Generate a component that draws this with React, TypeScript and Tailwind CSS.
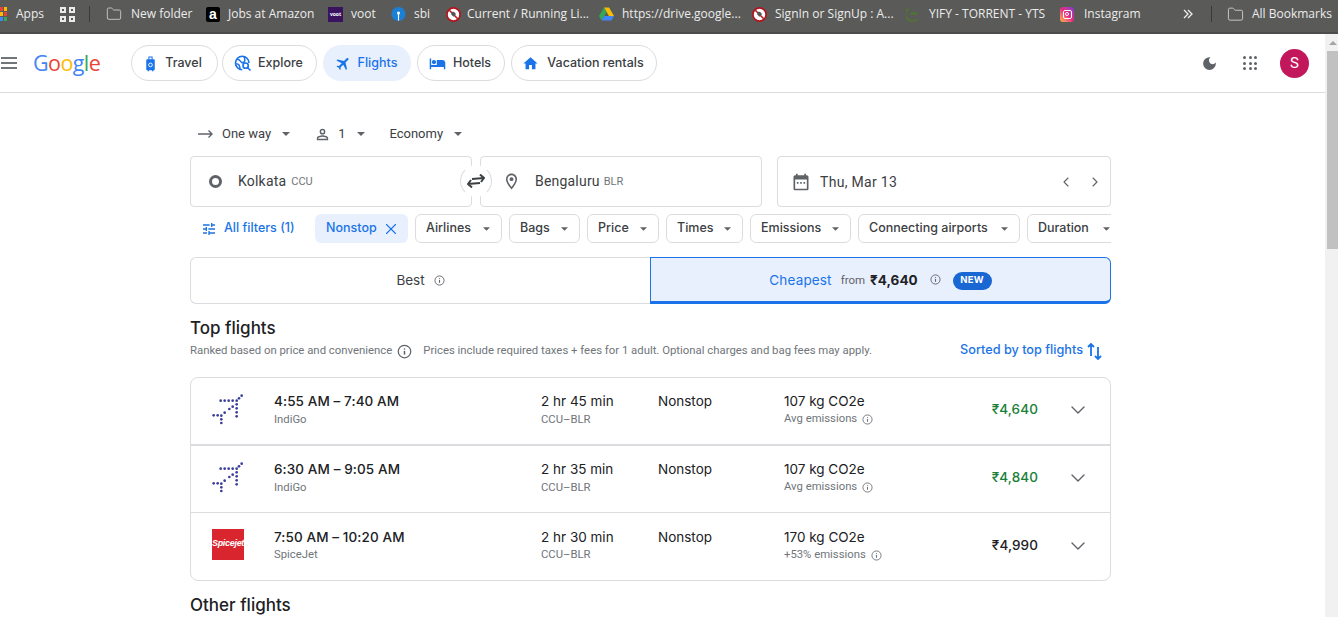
import React from 'react';
import { ChevronDown, ChevronLeft, ChevronRight, X, Folder } from 'lucide-react';

const Info = ({ className }: { className?: string }) => (
  <svg className={className} viewBox="0 0 24 24" fill="none" stroke="currentColor" strokeWidth={2}>
    <circle cx="12" cy="12" r="10" />
    <path d="M12 11v6" strokeWidth={2.4} />
    <path d="M12 7v2" strokeWidth={2.4} />
  </svg>
);

const Caret = ({ className }: { className?: string }) => (
  <svg className={className} viewBox="0 0 10 5" fill="currentColor">
    <path d="M0 0l5 5 5-5z" />
  </svg>
);

const Icon = ({ d, className }: { d: string; className?: string }) => (
  <svg className={className} viewBox="0 0 24 24" fill="currentColor">
    <path d={d} />
  </svg>
);

const PLANE = 'M21 16v-2l-8-5V3.5c0-.83-.67-1.5-1.5-1.5S10 2.67 10 3.5V9l-8 5v2l8-2.5V19l-2 1.5V22l3.5-1 3.5 1v-1.5L13 19v-5.5l8 2.5z';
const BED = 'M7 13c1.66 0 3-1.34 3-3S8.66 7 7 7s-3 1.34-3 3 1.34 3 3 3zm12-6h-8v7H3V5H1v15h2v-3h18v3h2v-9c0-2.21-1.79-4-4-4z';
const HOME = 'M10 20v-6h4v6h5v-8h3L12 3 2 12h3v8z';
const TUNE = 'M3 17v2h6v-2H3zM3 5v2h10V5H3zm10 16v-2h8v-2h-8v-2h-2v6h2zM7 9v2H3v2h4v2h2V9H7zm14 4v-2H11v2h10zm-6-4h2V7h4V5h-4V3h-2v6z';
const MOON = 'M12 3a9 9 0 1 0 9 9c0-.46-.04-.92-.1-1.36a5.4 5.4 0 0 1-4.4 2.26 5.4 5.4 0 0 1-3.14-9.8C12.92 3.04 12.46 3 12 3z';
const CAL = 'M19 4h-1V2h-2v2H8V2H6v2H5c-1.1 0-2 .9-2 2v14c0 1.1.9 2 2 2h14c1.1 0 2-.9 2-2V6c0-1.1-.9-2-2-2zm0 16H5V9h14v11zM7 12h2v2H7zm4 0h2v2h-2zm4 0h2v2h-2z';
const PIN = 'M12 2C8.13 2 5 5.13 5 9c0 5.25 7 13 7 13s7-7.75 7-13c0-3.87-3.13-7-7-7zM7 9c0-2.76 2.24-5 5-5s5 2.24 5 5c0 2.88-2.88 7.19-5 9.88C9.92 16.21 7 11.85 7 9zm5-2.5a2.5 2.5 0 1 0 0 5 2.5 2.5 0 0 0 0-5z';
const PERSON = 'M12 6a2 2 0 1 1 0 4 2 2 0 0 1 0-4m0 9c2.7 0 5.8 1.29 6 2v1H6v-.99c.2-.72 3.3-2.01 6-2.01M12 4a4 4 0 1 0 0 8 4 4 0 0 0 0-8zm0 9c-2.67 0-8 1.34-8 4v3h16v-3c0-2.66-5.33-4-8-4z';

const NoEntry = () => (
  <svg className="w-[15px] h-[15px]" viewBox="0 0 16 16">
    <circle cx="8" cy="8" r="7" fill="#fff" stroke="#b3141d" strokeWidth="1.8" />
    <path d="M3.5 3.5l9 9" stroke="#b3141d" strokeWidth="1.6" />
    <path d="M6 5.5c2-1 4 0 4.5 2.5L8 10.5 5.5 8z" fill="#555" />
  </svg>
);

const Favicon = ({ kind }: { kind: string }) => {
  if (kind === 'amazon') {
    return <span className="w-[14px] h-[15px] bg-black rounded-[2px] text-white text-[14px] leading-[14px] text-center font-bold font-['Liberation_Sans',sans-serif]">a</span>;
  }
  if (kind === 'voot') {
    return <span className="w-[15px] h-[15px] bg-[#3b1260] text-white text-[5px] leading-[15px] text-center font-bold">voot</span>;
  }
  if (kind === 'sbi') {
    return (
      <svg className="w-[15px] h-[16px]" viewBox="0 0 16 16">
        <circle cx="8" cy="8" r="7.5" fill="#1c7fd6" />
        <circle cx="8" cy="7" r="1.6" fill="#fff" />
        <rect x="7.4" y="7" width="1.2" height="8" fill="#fff" />
      </svg>
    );
  }
  if (kind === 'drive') {
    return (
      <svg className="w-[15px] h-[14px]" viewBox="0 0 16 14">
        <path d="M5.3 0h5.4l5.3 9h-5.4z" fill="#fbbc04" />
        <path d="M5.3 0L0 9l2.7 5 5.3-9z" fill="#34a853" />
        <path d="M2.7 14h10.6l2.7-5H5.4z" fill="#4285f4" />
      </svg>
    );
  }
  if (kind === 'yts') {
    return (
      <svg className="w-[15px] h-[15px]" viewBox="0 0 16 16" fill="none">
        <path d="M3 2a7 7 0 0 0 0 12c3 1.5 7 1 9-1" stroke="#4d7c25" strokeWidth="1.4" />
        <path d="M5 7h7" stroke="#4d7c25" strokeWidth="2" />
      </svg>
    );
  }
  if (kind === 'insta') {
    return (
      <span className="w-[14px] h-[15px] rounded-[3px] bg-gradient-to-tr from-[#fdb52b] via-[#e8227f] to-[#7a2fd0] flex items-center justify-center">
        <span className="w-[9px] h-[9px] rounded-[2px] border border-white flex items-center justify-center">
          <span className="w-[4px] h-[4px] rounded-full border border-white" />
        </span>
      </span>
    );
  }
  return <NoEntry />;
};

const bookmarks = [
  { kind: 'amazon', label: 'Jobs at Amazon', width: 'w-[122px]', gap: 'gap-2' },
  { kind: 'voot', label: 'voot', width: 'w-[63px]', gap: 'gap-2' },
  { kind: 'sbi', label: 'sbi', width: 'w-[55px]', gap: 'gap-2' },
  { kind: 'no', label: 'Current / Running Li...', width: 'w-[153px]', gap: 'gap-[6px]' },
  { kind: 'drive', label: 'https://drive.google...', width: 'w-[153px]', gap: 'gap-2' },
  { kind: 'no', label: 'SignIn or SignUp : A...', width: 'w-[154px]', gap: 'gap-2' },
  { kind: 'yts', label: 'YIFY - TORRENT - YTS', width: 'w-[154px]', gap: 'gap-2' },
  { kind: 'insta', label: 'Instagram', width: 'w-[123px]', gap: 'gap-[10px]' },
];

const BookmarksBar = () => (
  <div className="h-[34px] bg-[#5a5a58] border-b-2 border-[#4c4c4a] pb-[4px] flex items-center text-[12px] text-[#ececec] font-['Open_Sans',sans-serif] whitespace-nowrap shrink-0 overflow-hidden">
    <div className="w-[8px] h-[14px] grid grid-cols-2 gap-[1px] mr-[9px] -ml-[1px]">
      <span className="bg-[#ea4335]" />
      <span className="bg-[#fbbc04]" />
      <span className="bg-[#fbbc04]" />
      <span className="bg-[#ea4335]" />
      <span className="bg-[#4285f4]" />
      <span className="bg-[#34a853]" />
    </div>
    <span className="w-[44px]">Apps</span>
    <div className="w-[15px] h-[15px] grid grid-cols-2 gap-[3px]">
      <span className="border-2 border-[#ececec]" />
      <span className="border-2 border-[#ececec]" />
      <span className="border-2 border-[#ececec]" />
      <span className="border-2 border-[#ececec]" />
    </div>
    <div className="w-px h-[16px] bg-[#3a3a38] ml-[14px] mr-[16px]" />
    <div className="flex items-center gap-[9px] w-[100px]">
      <Folder className="w-[16px] h-[16px] text-[#cfcfcf]" strokeWidth={1.3} />
      <span>New folder</span>
    </div>
    {bookmarks.map((b) => (
      <div key={b.label} className={`flex items-center ${b.gap} ${b.width}`}>
        <Favicon kind={b.kind} />
        <span>{b.label}</span>
      </div>
    ))}
    <svg className="w-[10px] h-[10px] text-[#ececec]" viewBox="0 0 10 10" fill="none" stroke="currentColor" strokeWidth="1.3">
      <path d="M1 1l4 4-4 4M5 1l4 4-4 4" />
    </svg>
    <div className="w-px h-[16px] bg-[#3a3a38] ml-[18px] mr-[15px]" />
    <div className="flex items-center gap-2">
      <Folder className="w-[17px] h-[17px] text-[#cfcfcf]" strokeWidth={1.3} />
      <span>All Bookmarks</span>
    </div>
  </div>
);

const TravelIcon = () => (
  <svg className="w-[17px] h-[17px] text-[#1a73e8]" viewBox="0 0 24 24" fill="currentColor">
    <path d="M9 2h6v4h1.5c.8 0 1.5.7 1.5 1.5V20c0 .8-.7 1.500-1.500 1.500H16V23h-2v-1.500h-4V23H8v-1.500h-.5C6.700 21.500 6 20.800 6 20V7.500C6 6.700 6.700 6 7.500 6H9zm1.500 1.500V6h3V3.500z" />
    <circle cx="12" cy="14" r="2.600" fill="none" stroke="#fff" strokeWidth="1.300" />
  </svg>
);

const ExploreIcon = () => (
  <svg className="w-[18px] h-[18px] text-[#1a73e8]" viewBox="0 0 24 24" fill="none" stroke="currentColor" strokeWidth={2.200}>
    <path d="M11 21a9 9 0 1 1 9-9" />
    <path d="M4 7c3 0 4 1 5 3s2 2 4 1 2-4 0-8M3 13c3 0 5 1 5 7" strokeWidth={2} />
    <circle cx="15.500" cy="15.500" r="3.500" fill="#fff" />
    <path d="M18 18l4 4" />
  </svg>
);

const tabs = [
  { label: 'Travel', icon: <TravelIcon />, width: 'w-[87px] pr-[5px]', gap: 'gap-[6px]', margin: '' },
  { label: 'Explore', icon: <ExploreIcon />, width: 'w-[95px] pr-[2px]', gap: 'gap-[6px]', margin: 'ml-[4px]' },
  { label: 'Flights', icon: <Icon d={PLANE} className="w-[17px] h-[17px] rotate-45 text-[#1a73e8]" />, width: 'w-[88px] pr-[2px]', active: true, gap: 'gap-[6px]', margin: 'ml-[6px]' },
  { label: 'Hotels', icon: <Icon d={BED} className="w-[17px] h-[17px] text-[#1a73e8]" />, width: 'w-[88px] pr-[2px]', gap: 'gap-[7px]', margin: 'ml-[6px]' },
  { label: 'Vacation rentals', icon: <Icon d={HOME} className="w-[17px] h-[17px] text-[#1a73e8]" />, width: 'w-[146px] pr-[2px]', gap: 'gap-[8px]', margin: 'ml-[6px]' },
];

const Header = () => (
  <header className="h-[59px] border-b border-[#dadce0] flex items-center shrink-0">
    <div className="w-[16px] ml-[1px] flex flex-col gap-[3px]">
      <span className="h-[2px] bg-[#70757a]" />
      <span className="h-[2px] bg-[#70757a]" />
      <span className="h-[2px] bg-[#70757a]" />
    </div>
    <div className="ml-[16px] w-[83px] text-[21.500px] leading-none tracking-[-0.6px] font-['Open_Sans',sans-serif]">
      <span className="text-[#4285f4]">G</span>
      <span className="text-[#ea4335]">o</span>
      <span className="text-[#fbbc04]">o</span>
      <span className="text-[#4285f4]">g</span>
      <span className="text-[#34a853]">l</span>
      <span className="text-[#ea4335]">e</span>
    </div>
    <nav className="ml-[15px] flex font-['Inter',sans-serif]">
      {tabs.map((t) => (
        <div
          key={t.label}
          className={`h-[36px] rounded-full flex items-center justify-center ${t.margin} ${t.gap} ${t.width} text-[12.500px] font-medium ${
            t.active ? 'bg-[#e8f0fe] text-[#1a73e8]' : 'border border-[#dadce0] text-[#3c4043]'
          }`}
        >
          {t.icon}
          <span>{t.label}</span>
        </div>
      ))}
    </nav>
    <div className="ml-auto flex items-center">
      <Icon d={MOON} className="w-[17px] h-[17px] text-[#5f6368]" />
      <div className="ml-[25px] grid grid-cols-3 gap-[2.500px] w-[14px]">
        {[0, 1, 2, 3, 4, 5, 6, 7, 8].map((i) => (
          <span key={i} className="w-[3px] h-[3px] rounded-full bg-[#5f6368]" />
        ))}
      </div>
      <div className="ml-[23px] mr-[16px] w-[29px] h-[29px] rounded-full bg-[#c2185b] text-white text-[15px] flex items-center justify-center">S</div>
    </div>
  </header>
);

const filters = [
  { label: 'Airlines', width: 'w-[87px]' },
  { label: 'Bags', width: 'w-[71px]' },
  { label: 'Price', width: 'w-[72px]' },
  { label: 'Times', width: 'w-[77px]' },
  { label: 'Emissions', width: 'w-[101px]' },
  { label: 'Connecting airports', width: 'w-[162px]' },
  { label: 'Duration', width: 'w-[95px]' },
];

const OptionsRow = () => (
  <div className="h-[24px] flex items-center text-[13px] text-[#5f6368]">
    <svg className="ml-[8px] w-[15px] h-[10px] text-[#5f6368]" viewBox="0 0 15 10" fill="none" stroke="currentColor" strokeWidth="1.400">
      <path d="M0 5h14M10.500 1.500L14 5l-3.500 3.500" />
    </svg>
    <span className="ml-[9px] text-[#3c4043]">One way</span>
    <Caret className="ml-[11px] w-[8px] h-[4px]" />
    <Icon d={PERSON} className="ml-[24px] w-[17px] h-[17px]" />
    <span className="ml-[7px] text-[#3c4043]">1</span>
    <Caret className="ml-[12px] w-[8px] h-[4px]" />
    <span className="ml-[24px] text-[#3c4043]">Economy</span>
    <Caret className="ml-[11px] w-[8px] h-[4px]" />
  </div>
);

const SearchRow = () => (
  <div className="mt-[10px] h-[51px] flex">
    <div className="relative flex">
      <div className="w-[282px] border border-[#dadce0] rounded-[4px] flex items-center">
        <span className="ml-[18px] w-[13px] h-[13px] rounded-full border-[3px] border-[#5f6368]" />
        <span className="ml-[16px] text-[14px] text-[#3c4043] tracking-[0.2px]">Kolkata</span>
        <span className="ml-[5px] mt-[2px] text-[11px] text-[#70757a]">CCU</span>
      </div>
      <div className="ml-[8px] w-[282px] border border-[#dadce0] rounded-[4px] flex items-center">
        <Icon d={PIN} className="ml-[21px] w-[19px] h-[19px] text-[#5f6368]" />
        <span className="ml-[14px] text-[14px] text-[#3c4043] tracking-[0.2px]">Bengaluru</span>
        <span className="ml-[4px] mt-[2px] text-[11px] text-[#70757a]">BLR</span>
      </div>
      <div className="absolute left-[270px] top-[9px] w-[32px] h-[32px] rounded-full bg-white border border-[#dadce0] border-y-transparent flex items-center justify-center">
        <svg className="w-[18px] h-[14px] text-[#3c4043]" viewBox="0 0 18 14" fill="none" stroke="currentColor" strokeWidth="2">
          <path d="M5 5l12-1M13 0.500l4 3.500-3 4" />
          <path d="M13 9L1 10M5 13.500L1 10l3-4" />
        </svg>
      </div>
    </div>
    <div className="ml-[15px] flex-1 border border-[#dadce0] rounded-[4px] flex items-center">
      <Icon d={CAL} className="ml-[13px] w-[20px] h-[20px] text-[#5f6368]" />
      <span className="ml-[9px] mt-[1px] text-[14px] text-[#3c4043] tracking-[0.3px]">Thu, Mar 13</span>
      <ChevronLeft className="ml-auto w-[16px] h-[16px] text-[#5f6368]" strokeWidth={1.700} />
      <ChevronRight className="ml-[13px] mr-[7px] w-[16px] h-[16px] text-[#5f6368]" strokeWidth={1.700} />
    </div>
  </div>
);

const FilterRow = () => (
  <div className="mt-[7px] h-[29px] flex items-stretch overflow-hidden text-[12.500px] font-['Inter',sans-serif] font-medium">
    <div className="w-[125px] shrink-0 flex items-center text-[#1a73e8]">
      <Icon d={TUNE} className="ml-[11px] w-[16px] h-[16px]" />
      <span className="ml-[7px]">All filters (1)</span>
    </div>
    <div className="w-[93px] shrink-0 rounded-[6px] bg-[#e8f0fe] text-[#1a73e8] flex items-center pl-[11px]">
      <span>Nonstop</span>
      <X className="ml-[5px] w-[18px] h-[18px]" strokeWidth={1.500} />
    </div>
    {filters.map((f) => (
      <div key={f.label} className={`ml-[7px] shrink-0 ${f.width} rounded-[6px] border border-[#dadce0] text-[#3c4043] flex items-center pl-[10px]`}>
        <span>{f.label}</span>
        <Caret className="ml-auto mr-[11px] w-[7px] h-[4px] text-[#5f6368]" />
      </div>
    ))}
  </div>
);

const SortTabs = () => (
  <div className="mt-[14px] h-[47px] flex font-['Inter',sans-serif]">
    <div className="w-[460px] border border-r-0 border-[#dadce0] rounded-l-[6px] flex items-center justify-center text-[13.500px] text-[#3c4043]">
      <span>Best</span>
      <Info className="ml-[9px] w-[11px] h-[11px] text-[#5f6368]" />
    </div>
    <div className="flex-1 bg-[#e8f0fe] border border-b-[3px] border-[#1a73e8] rounded-r-[6px] flex items-center justify-center">
      <span className="mt-[1px] text-[13.500px] text-[#1a73e8] tracking-[0.15px]">Cheapest</span>
      <span className="ml-[9px] mt-[3px] text-[11.500px] text-[#5f6368] font-['Roboto',sans-serif]">from</span>
      <span className="ml-[5px] mt-[1px] text-[13.500px] font-bold text-[#202124]">₹4,640</span>
      <Info className="ml-[12px] w-[11px] h-[11px] text-[#5f6368]" />
      <span className="ml-[12px] mt-[2px] h-[18px] w-[39px] rounded-full bg-[#1967d2] text-white text-[9.500px] font-bold flex items-center justify-center tracking-[0.3px]">NEW</span>
    </div>
  </div>
);

const IndigoLogo = () => {
  const dots = [
    [62, 47], [74, 47], [86, 47], [98, 47], [110, 47], [125, 32], [117, 40], [110, 58], [110, 70], [110, 82], [110, 94],
    [98, 65], [88, 72], [74, 83], [64, 92], [41, 91], [53, 91], [64, 103], [64, 114],
  ];
  return (
    <svg className="w-[32px] h-[32px]" viewBox="36 24 96 96" fill="#3b3f9c">
      {dots.map(([x, y]) => (
        <circle key={`${x}-${y}`} cx={x} cy={y} r="4" />
      ))}
    </svg>
  );
};

const SpiceLogo = () => (
  <div className="w-[32px] h-[31px] pb-[2px] bg-[#d9262e] text-white text-[9px] italic font-bold flex items-center justify-center font-['Liberation_Sans',sans-serif] tracking-[-0.3px]">
    Spicejet
  </div>
);

const flights = [
  { times: '4:55 AM – 7:40 AM', airline: 'IndiGo', logo: <IndigoLogo />, dur: '2 hr 45 min', co2: '107 kg CO2e', note: 'Avg emissions', price: '₹4,640', green: true, rowClass: 'h-[68px] pt-[14px] border-b-2 border-[#dadce0]', subClass: 'mt-[2px]' },
  { times: '6:30 AM – 9:05 AM', airline: 'IndiGo', logo: <IndigoLogo />, dur: '2 hr 35 min', co2: '107 kg CO2e', note: 'Avg emissions', price: '₹4,840', green: true, rowClass: 'h-[67px] pt-[14px] border-b border-[#dadce0]', subClass: 'mt-[2px]' },
  { times: '7:50 AM – 10:20 AM', airline: 'SpiceJet', logo: <SpiceLogo />, dur: '2 hr 30 min', co2: '170 kg CO2e', note: '+53% emissions', price: '₹4,990', green: false, rowClass: 'h-[67px] pt-[15px]', subClass: 'mt-[1px]' },
];

const FlightRow = ({ f }: { f: (typeof flights)[number] }) => (
  <div className={`${f.rowClass} flex items-start font-['Inter',sans-serif]`}>
    <div className="ml-[21px] mt-[1px] w-[32px] flex justify-center">{f.logo}</div>
    <div className="ml-[30px] w-[267px]">
      <div className="text-[13.500px] leading-[18px] font-medium text-[#202124] tracking-[0.1px]">{f.times}</div>
      <div className={`${f.subClass} text-[11.300px] leading-[16px] text-[#70757a] font-['Roboto',sans-serif]`}>{f.airline}</div>
    </div>
    <div className="w-[117px]">
      <div className="text-[13.500px] leading-[18px] text-[#202124]">{f.dur}</div>
      <div className={`${f.subClass} text-[11.300px] leading-[16px] text-[#70757a] font-['Roboto',sans-serif]`}>CCU–BLR</div>
    </div>
    <div className="w-[126px] text-[13.500px] leading-[18px] text-[#202124]">Nonstop</div>
    <div className="w-[175px]">
      <div className="text-[13.500px] leading-[18px] text-[#202124]">{f.co2}</div>
      <div className="mt-[1px] text-[11.300px] leading-[16px] text-[#70757a] flex items-center font-['Roboto',sans-serif]">
        <span>{f.note}</span>
        <Info className="ml-[5px] w-[11px] h-[11px]" />
      </div>
    </div>
    <div className={`w-[79px] mt-[8px] text-right text-[13.500px] leading-[18px] font-medium tracking-[0.1px] ${f.green ? 'text-[#188038]' : 'text-[#202124]'}`}>{f.price}</div>
    <ChevronDown className="ml-[28px] mt-[6px] w-[24px] h-[24px] text-[#5f6368]" strokeWidth={1.400} />
  </div>
);

const Results = () => (
  <div className="mt-[13px]">
    <h2 className="text-[17px] leading-[22px] font-medium text-[#202124] font-['Inter',sans-serif]">Top flights</h2>
    <div className="mt-[2px] h-[20px] flex items-center text-[11.350px] text-[#70757a]">
      <span>Ranked based on price and convenience</span>
      <Info className="ml-[5px] w-[15px] h-[15px] text-[#5f6368]" />
      <span className="ml-[11px]">Prices include required taxes + fees for 1 adult. Optional charges and bag fees may apply.</span>
      <span className="ml-auto mb-[2px] text-[12.700px] font-medium text-[#1a73e8] font-['Inter',sans-serif]">Sorted by top flights</span>
      <svg className="ml-[4px] mr-[9px] w-[15px] h-[18px] text-[#1a73e8]" viewBox="0 0 15 18" fill="none" stroke="currentColor" strokeWidth="1.800">
        <path d="M4 14V2M1 5l3-3 3 3" />
        <path d="M11 5v12M8 14l3 3 3-3" />
      </svg>
    </div>
    <div className="mt-[16px] border border-[#dadce0] rounded-[8px]">
      {flights.map((f) => (
        <FlightRow key={f.times} f={f} />
      ))}
    </div>
    <h2 className="mt-[13px] text-[17px] leading-[22px] font-medium text-[#202124] font-['Inter',sans-serif]">Other flights</h2>
  </div>
);

const Scrollbar = () => (
  <div className="w-[13px] shrink-0 bg-[#f1f1f1] pl-[2px] flex flex-col">
    <div className="h-[17px] flex items-center justify-center">
      <span className="w-0 h-0 border-x-[4px] border-x-transparent border-b-[4px] border-b-[#a3a3a3]" />
    </div>
    <div className="h-[198px] bg-[#c1c1c1]" />
  </div>
);

export default function App() {
  return (
    <div className="w-[1338px] h-[617px] overflow-hidden flex flex-col bg-white font-['Roboto',sans-serif]">
      <BookmarksBar />
      <div className="flex-1 flex min-h-0">
        <div className="flex-1 min-w-0 overflow-hidden">
          <Header />
          <main className="ml-[190px] w-[921px] pt-[29px]">
            <OptionsRow />
            <SearchRow />
            <FilterRow />
            <SortTabs />
            <Results />
          </main>
        </div>
        <Scrollbar />
      </div>
    </div>
  );
}
